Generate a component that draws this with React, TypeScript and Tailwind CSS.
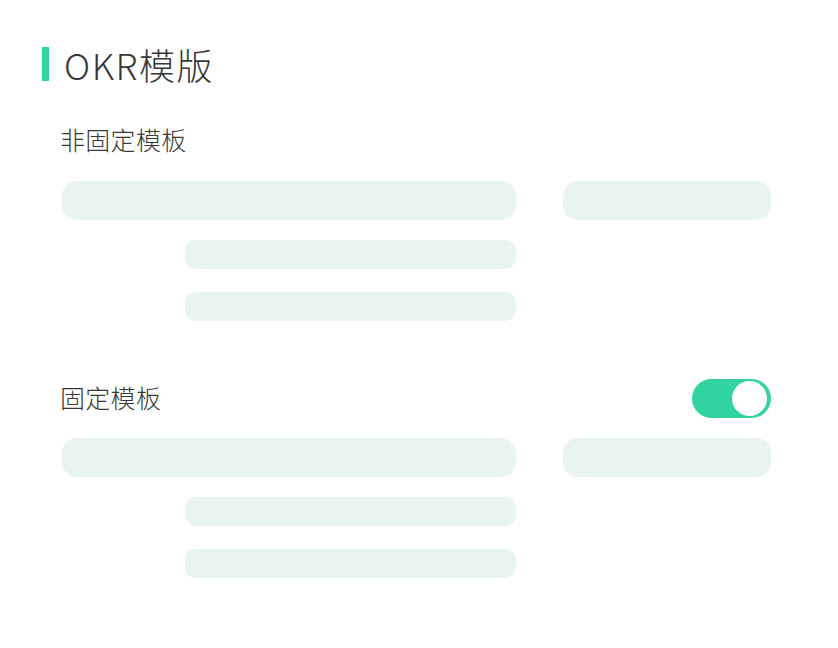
const FONT = '[font-family:"Noto_Sans_CJK_SC","Noto_Sans",sans-serif]'

function Bars() {
  return (
    <div className="pl-[62px] w-[771px]">
      <div className="flex gap-[47px]">
        <div className="h-[39px] w-[454px] rounded-[15px] bg-[#e8f4f1]" />
        <div className="h-[39px] w-[208px] rounded-[15px] bg-[#e8f4f1]" />
      </div>
      <div className="mt-[20px] ml-[123px] h-[29px] w-[331px] rounded-[11px] bg-[#e8f4f1]" />
      <div className="mt-[23px] ml-[123px] h-[29px] w-[331px] rounded-[11px] bg-[#e8f4f1]" />
    </div>
  )
}

export default function App() {
  return (
    <div className={`w-[838px] h-[648px] bg-white text-[#383838] ${FONT}`}>
      {/* Title */}
      <div className="pt-[47px] pl-[42px] flex items-center gap-[15px]">
        <div className="w-[7px] h-[34px] bg-[#31d3a0]" />
        <h1 className="text-[36px] leading-[34px] font-light tracking-[1.5px]">OKR模版</h1>
      </div>

      {/* Non-fixed template */}
      <div className="mt-[42px] pl-[60px] text-[25px] leading-[32px] font-light tracking-[0.3px]">非固定模板</div>
      <div className="mt-[26px]">
        <Bars />
      </div>

      {/* Fixed template */}
      <div className="mt-[58px] pl-[60px] w-[771px] flex items-center justify-between h-[39px]">
        <span className="text-[25px] leading-[32px] font-light tracking-[0.3px] pb-[4px]">固定模板</span>
        <div className="w-[79px] h-[39px] rounded-full bg-[#31d3a0] flex items-center justify-end pr-[4px]">
          <div className="w-[35px] h-[35px] rounded-full bg-white" />
        </div>
      </div>
      <div className="mt-[20px]">
        <Bars />
      </div>
    </div>
  )
}
